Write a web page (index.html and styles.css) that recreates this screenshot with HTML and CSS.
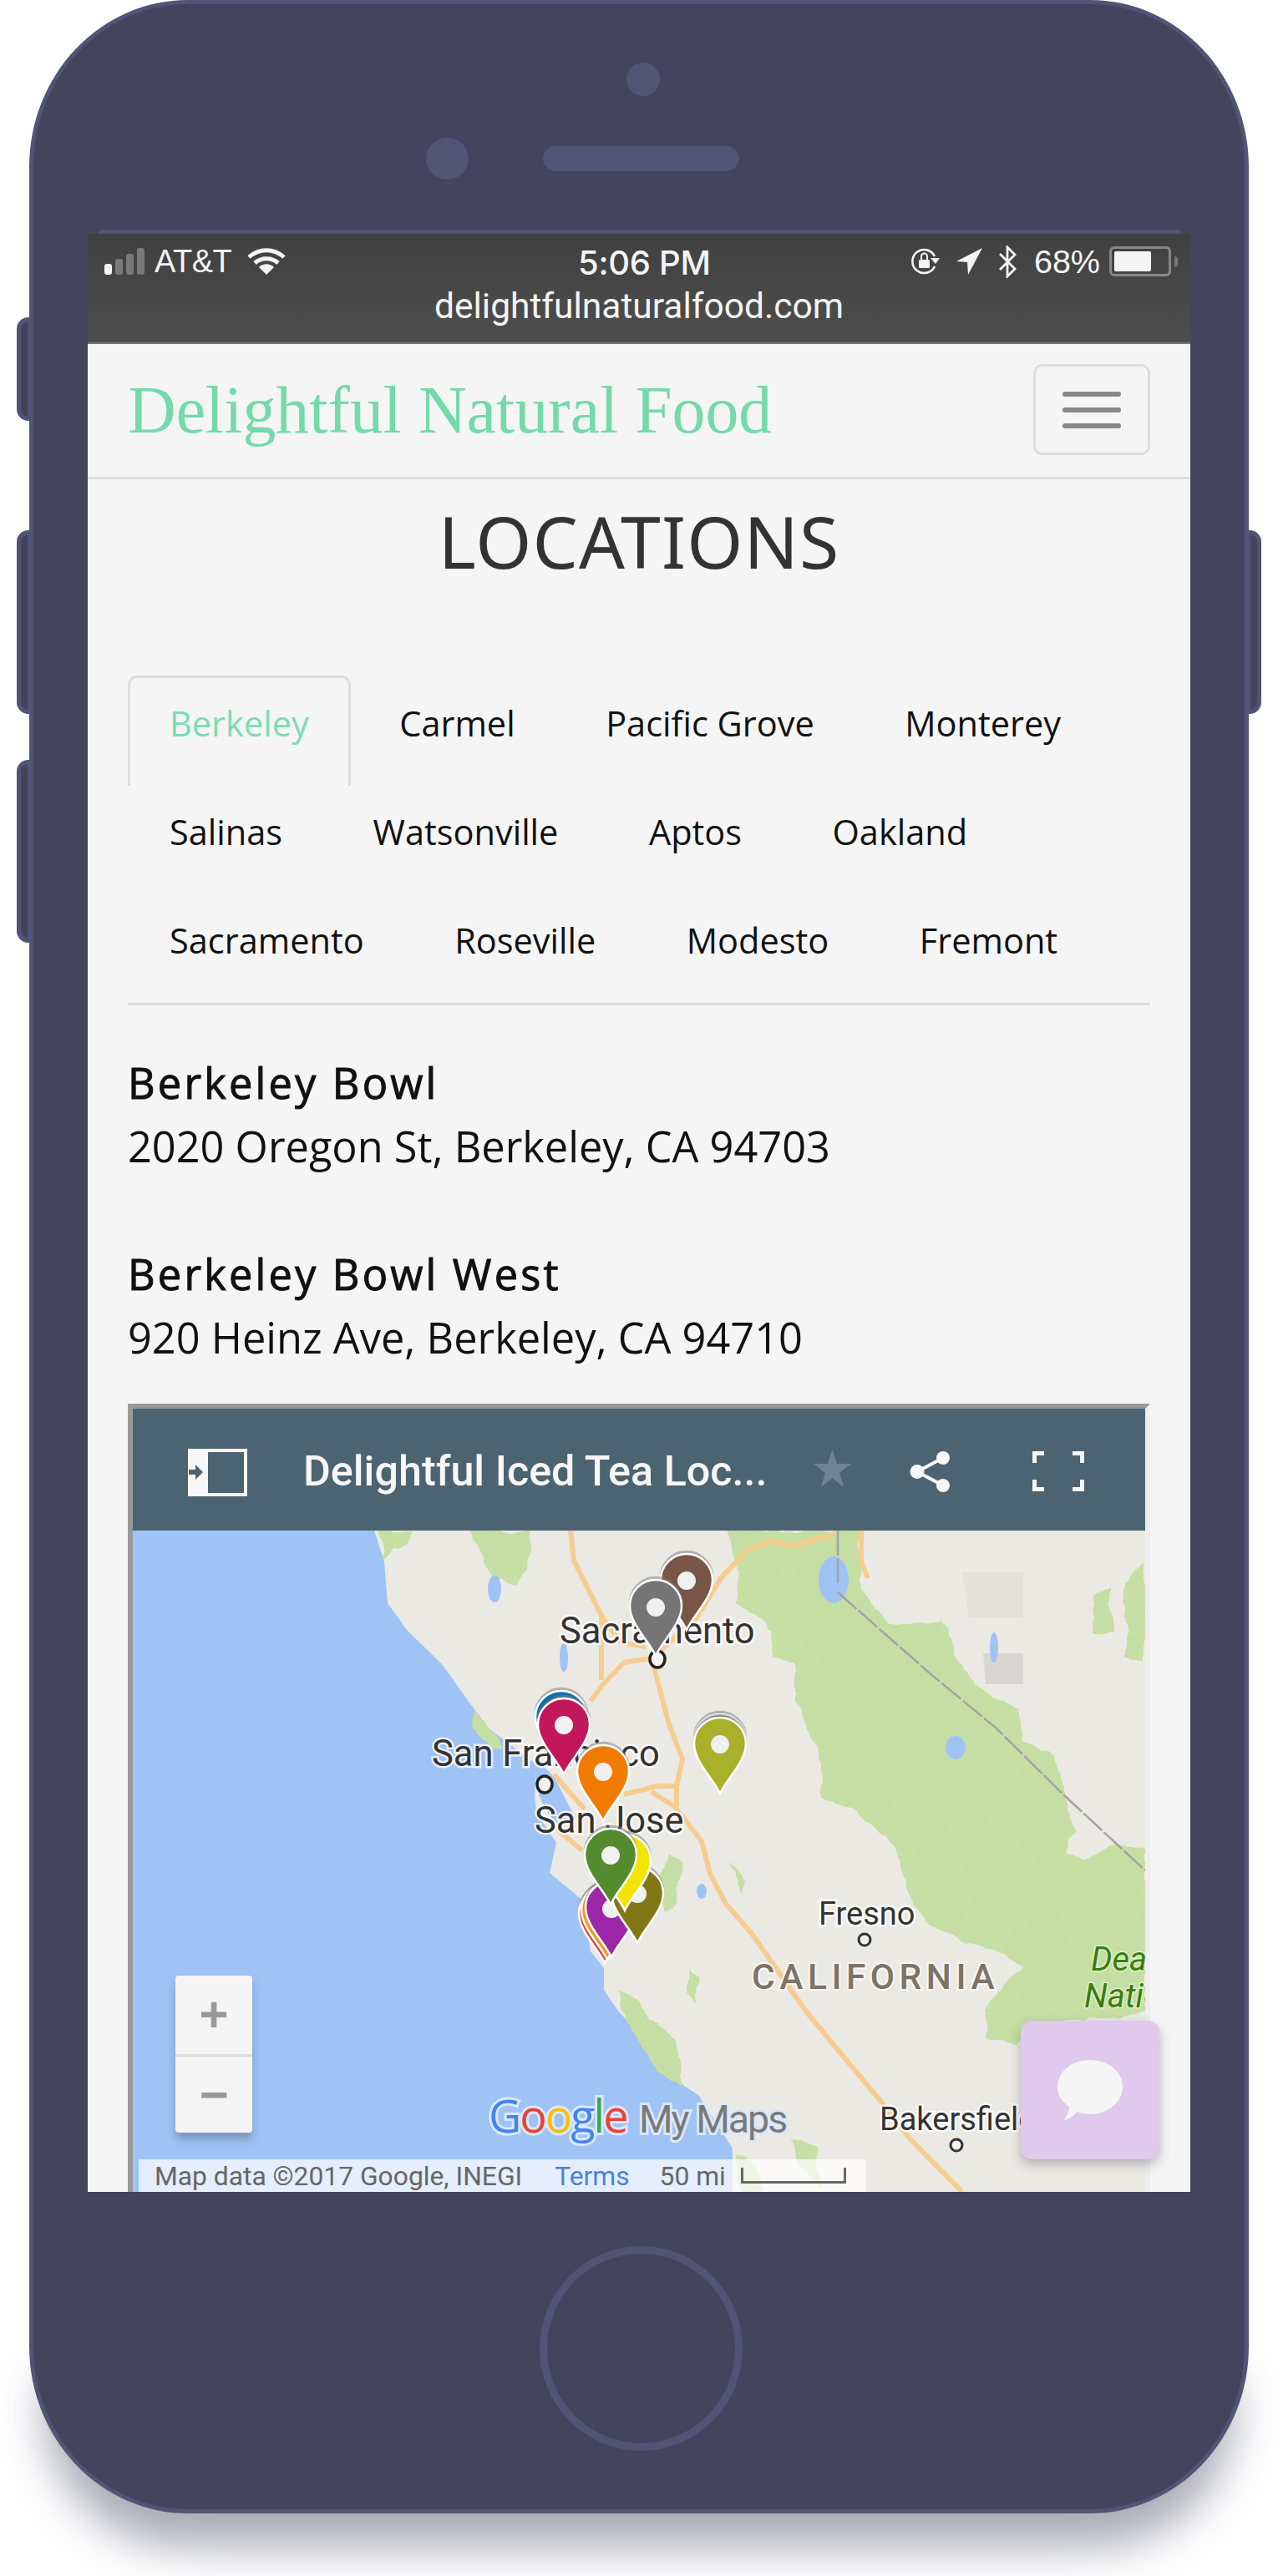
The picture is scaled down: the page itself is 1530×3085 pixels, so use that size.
FILE: index.html
```html
<!DOCTYPE html>
<html lang="en">
<head>
<meta charset="utf-8">
<title>Delightful Natural Food - Locations</title>
<link rel="stylesheet" href="styles.css">
</head>
<body>
<div class="stage">
  <div class="phone-shadow"></div>
  <div class="side-btn side-mute"></div>
  <div class="side-btn side-up"></div>
  <div class="side-btn side-down"></div>
  <div class="side-btn side-power"></div>
  <div class="phone">
    <div class="bezel-top">
      <div class="sensor"></div>
      <div class="earpiece-row">
        <div class="camera"></div>
        <div class="speaker"></div>
      </div>
    </div>
    <div class="screen-lip"></div>
    <div class="screen">
      <div class="status">
        <div class="status-row">
          <div class="status-left">
            <svg class="signal" viewBox="0 0 49 32"><rect y="19" width="9" height="13" rx="3" fill="#f4f4f4"/><rect x="13" y="13" width="9" height="19" rx="3" fill="#7a7a7a"/><rect x="26" y="7" width="9" height="25" rx="3" fill="#7a7a7a"/><rect x="39" width="9" height="32" rx="3" fill="#7a7a7a"/></svg>
            <span class="carrier">AT&amp;T</span>
            <svg class="wifi" viewBox="0 0 46 32"><path d="M2 11C14 0 32 0 44 11" fill="none" stroke="#f4f4f4" stroke-width="5"/><path d="M9 18C17 11 29 11 37 18" fill="none" stroke="#f4f4f4" stroke-width="5"/><path d="M14 23C19 18 27 18 32 23L23 32Z" fill="#f4f4f4"/></svg>
          </div>
          <span class="clock">5:06 PM</span>
          <div class="status-right">
            <svg class="ico-lock" viewBox="0 0 36 32"><path d="M30 22A14 14 0 1 1 30 10" fill="none" stroke="#f4f4f4" stroke-width="2.6"/><path d="M25 12L36 12L31 19Z" fill="#f4f4f4"/><rect x="11" y="14" width="13" height="10" rx="1.5" fill="#f4f4f4"/><path d="M14 14V10a3.5 3.5 0 0 1 7 0V14" fill="none" stroke="#f4f4f4" stroke-width="2"/></svg>
            <svg class="ico-loc" viewBox="0 0 31 32"><path d="M31 0L14 32L13 17L0 16Z" fill="#f4f4f4"/></svg>
            <svg class="ico-bt" viewBox="0 0 23 39"><path d="M2 10L20 28L11 37V2L20 11L2 29" fill="none" stroke="#f4f4f4" stroke-width="2.8"/></svg>
            <span class="pct">68%</span>
            <div class="battery"><div class="battery-fill"></div></div>
            <div class="battery-nub"></div>
          </div>
        </div>
        <div class="url">delightfulnaturalfood.com</div>
      </div>
      <header class="nav">
        <a class="brand">Delightful Natural Food</a>
        <div class="toggle"><span></span><span></span><span></span></div>
      </header>
      <main class="content">
        <h1 class="page-title">LOCATIONS</h1>
        <nav class="tabs">
          <a class="tab active">Berkeley</a><a class="tab">Carmel</a><a class="tab">Pacific Grove</a><a class="tab">Monterey</a>
          <a class="tab">Salinas</a><a class="tab">Watsonville</a><a class="tab">Aptos</a><a class="tab">Oakland</a>
          <a class="tab">Sacramento</a><a class="tab">Roseville</a><a class="tab">Modesto</a><a class="tab">Fremont</a>
        </nav>
        <section class="store">
          <h2>Berkeley Bowl</h2>
          <p>2020 Oregon St, Berkeley, CA 94703</p>
        </section>
        <section class="store">
          <h2>Berkeley Bowl West</h2>
          <p>920 Heinz Ave, Berkeley, CA 94710</p>
        </section>
        <div class="map-frame">
          <div class="map-head">
            <svg class="mh-panel" viewBox="0 0 71 57"><path d="M0 0H24V57H0Z" fill="#f7f7f7"/><path d="M24 2H69V55H24" fill="none" stroke="#f7f7f7" stroke-width="4"/><path d="M1 25H9V19L18 28L9 37V31H1Z" fill="#4c6472"/></svg>
            <span class="mh-title">Delightful Iced Tea Loc...</span>
            <svg class="mh-star" viewBox="0 0 45 47"><path d="M22.500 1L28 18H45L31 29L36 46L22.500 35L9 46L14 29L0 18H17Z" fill="#6f8494"/></svg>
            <svg class="mh-share" viewBox="0 0 49 49"><path d="M40 8L9 24.500L40 41" fill="none" stroke="#f7f7f7" stroke-width="4"/><circle cx="40" cy="8" r="8" fill="#f7f7f7"/><circle cx="9" cy="24.500" r="8.500" fill="#f7f7f7"/><circle cx="40" cy="41" r="8" fill="#f7f7f7"/></svg>
            <svg class="mh-full" viewBox="0 0 62 48"><path d="M2.500 14V2.500H14M48 2.500H59.500V14M2.500 34V45.500H14M48 45.500H59.500V34" fill="none" stroke="#f7f7f7" stroke-width="5"/></svg>
          </div>
          <div class="map-body">
            <svg class="map-art" viewBox="159 1833 1212 792">
              <defs>
                <path id="pin" d="M0 90C-8 72 -31 52 -31 30A31 31 0 0 1 31 30C31 52 8 72 0 90Z"/>
                <filter id="rough" filterUnits="userSpaceOnUse" x="159" y="1833" width="1212" height="792">
                  <feTurbulence type="fractalNoise" baseFrequency=".03" numOctaves="3" seed="4" result="n"/>
                  <feDisplacementMap in="SourceGraphic" in2="n" scale="14" xChannelSelector="R" yChannelSelector="G" result="d"/>
                  <feTurbulence type="fractalNoise" baseFrequency=".05 .08" numOctaves="3" seed="9"/>
                  <feColorMatrix type="matrix" values="0 0 0 0 .55  0 0 0 0 .72  0 0 0 0 .40  0 0 0 1.6 -.7"/>
                  <feComposite in2="d" operator="in" result="tex"/>
                  <feMerge><feMergeNode in="d"/><feMergeNode in="tex"/></feMerge>
                </filter>
              </defs>
              <rect x="159" y="1833" width="1212" height="792" fill="#9fc3f5"/>
              <path d="M448 1833L460 1870L464 1920L488 1953L529 1993L565 2043L585 2070L642 2113L640 2150L642 2170L666 2207L658 2243L699 2277L707 2337L723 2357L723 2383L739 2407L772 2443L812 2493L837 2510L877 2573L877 2625H1371V1833Z" fill="#ebe9e4"/>
              <path d="M642 2112C665 2118 672 2150 690 2178L668 2184C650 2170 638 2140 642 2112Z" fill="#9fc3f5"/>
              <g fill="#c6dfa3" filter="url(#rough)">
                <path d="M452 1833H496L490 1847L470 1852L460 1870Z"/>
                <path d="M561 1833H634L632 1880L618 1897L590 1890L575 1860Z"/>
                <path d="M869 1833L885 1883L881 1917L926 1953L922 1987L950 1995L950 2037L982 2103L985 2150L1023 2170L1071 2210L1088 2267L1112 2307L1193 2337L1225 2357L1193 2383L1185 2403L1181 2440L1217 2450L1240 2420H1330L1371 2410V2213L1330 2208L1300 2230L1274 2217L1290 2190L1274 2143L1262 2103L1225 2083L1221 2047L1165 2020L1128 1940L1063 1947L1031 1903V1833Z"/>
                <path d="M1347 1895L1371 1870V1990L1347 1985Z"/>
                <path d="M1310 1915L1331 1903V1953H1306Z"/>
                <path d="M570 2045L585 2070L605 2095L585 2092L565 2070Z"/>
                <path d="M740 2385L765 2395L775 2420L808 2440L815 2500L790 2480L750 2420Z"/>
                <path d="M800 2220L815 2228L810 2280L798 2290L790 2260Z"/>
                <path d="M825 2358L838 2370L832 2400L822 2380Z"/>
                <path d="M880 2580L905 2590L915 2625H885Z"/>
                <path d="M950 2560L975 2570L985 2620L955 2590Z"/>
                <path d="M872 2230L890 2250L885 2268Z"/>
              </g>
              <path d="M1152 1883H1225V1937H1160Z" fill="#e3e1d8"/>
              <path d="M1177 1980H1225V2017H1180Z" fill="#d7d6d2"/>
              <g fill="#9fc3f5">
                <ellipse cx="998" cy="1892" rx="18" ry="28"/>
                <ellipse cx="1190" cy="1973" rx="5" ry="18"/>
                <ellipse cx="1144" cy="2093" rx="12" ry="14"/>
                <ellipse cx="592" cy="1903" rx="8" ry="16"/>
                <ellipse cx="675" cy="1985" rx="5" ry="17"/>
                <ellipse cx="840" cy="2265" rx="6" ry="9"/>
              </g>
              <path d="M1003 1833V1897M1003 1907L1112 2003L1193 2070L1274 2150L1371 2240" fill="none" stroke="#a3a3a6" stroke-width="2.500" stroke-dasharray="30 3"/>
              <g fill="none" stroke="#f6cc8f" stroke-width="6" stroke-linejoin="round">
                <path d="M683 1833L687 1869L720 1935V2012"/>
                <path d="M707 2037L723 2016L747 1991L780 1986L787 2012L800 2062L817 2107L810 2139V2163"/>
                <path d="M810 2139H787L747 2149"/>
                <path d="M780 2146L807 2163L840 2205L850 2244L869 2280L901 2317L966 2410L999 2450L1055 2517L1088 2560L1152 2625"/>
                <path d="M663 2125L700 2167M667 2191L697 2216"/>
                <path d="M780 1986L833 1939L863 1890L893 1858L920 1846L950 1851L999 1837"/>
                <path d="M1031 1833V1870L1039 1890"/>
                <path d="M720 1935L743 1967L773 1972"/>
              </g>
              <g class="map-label">
                <text x="670" y="1968">Sacramento</text>
                <text x="517" y="2115">San Francisco</text>
                <text x="640" y="2195">San Jose</text>
              </g>
              <g class="map-label-sm">
                <text x="980" y="2305">Fresno</text>
                <text x="1053" y="2551">Bakersfield</text>
              </g>
              <text class="map-region" x="900" y="2382">CALIFORNIA</text>
              <g class="map-park">
                <text x="1306" y="2360">Death Valley</text>
                <text x="1298" y="2404">National Park</text>
              </g>
              <g fill="#f4f4f4" stroke="#222" stroke-width="3.500">
                <ellipse cx="787" cy="1987" rx="9" ry="10"/>
                <ellipse cx="652" cy="2137" rx="9" ry="10"/>
              </g>
              <g fill="#f0f0f0" stroke="#333" stroke-width="3">
                <circle cx="1035" cy="2323" r="7"/>
                <circle cx="1145" cy="2569" r="7"/>
              </g>
              <g class="pins">
                <use href="#pin" x="822" y="1862" fill="#795548"/>
                <circle cx="822" cy="1893" r="11" fill="#f0f0f0"/>
                <use href="#pin" x="785" y="1893" fill="#757575"/>
                <circle cx="785" cy="1925" r="11" fill="#f0f0f0"/>
                <use href="#pin" x="672" y="2026" fill="#0f6fa9"/>
                <use href="#pin" x="675" y="2035" fill="#c2185b"/>
                <circle cx="675" cy="2066" r="11" fill="#f0f0f0"/>
                <use href="#pin" x="862" y="2054" fill="#5f85a8"/>
                <use href="#pin" x="862" y="2058" fill="#a9b029"/>
                <circle cx="862" cy="2089" r="11" fill="#f0f0f0"/>
                <use href="#pin" x="722" y="2091" fill="#ef7c00"/>
                <circle cx="722" cy="2122" r="11" fill="#f0f0f0"/>
                <use href="#pin" x="724" y="2261" fill="#e53935"/>
                <use href="#pin" x="727" y="2257" fill="#ef9a1a"/>
                <use href="#pin" x="732" y="2254" fill="#9c27a8"/>
                <circle cx="732" cy="2286" r="11" fill="#f0f0f0"/>
                <use href="#pin" x="763" y="2237" fill="#827717"/>
                <circle cx="763" cy="2268" r="11" fill="#f0f0f0"/>
                <use href="#pin" x="748" y="2198" fill="#f4e400"/>
                <use href="#pin" x="731" y="2191" fill="#558b2f"/>
                <circle cx="731" cy="2222" r="11" fill="#f0f0f0"/>
              </g>
              <g class="map-logo">
                <text x="585" y="2554"><tspan fill="#4285f4">G</tspan><tspan fill="#ea4335">o</tspan><tspan fill="#fbbc05">o</tspan><tspan fill="#4285f4">g</tspan><tspan fill="#34a853">l</tspan><tspan fill="#ea4335">e</tspan></text>
                <text class="my-maps" x="765" y="2554">My Maps</text>
              </g>
            </svg>
            <div class="zoom-ctl">
              <div class="zoom-btn">+</div>
              <div class="zoom-btn">&#8722;</div>
            </div>
            <div class="attrib">
              <span>Map data &#169;2017 Google, INEGI</span>
              <span class="terms">Terms</span>
              <span>50 mi</span>
              <span class="scale-bar"></span>
            </div>
          </div>
        </div>
      </main>
      <div class="chat">
        <svg class="chat-ico" viewBox="0 0 78 72"><path d="M39 0C61 0 78 14 78 32C78 50 61 65 39 65C33 65 28 64 24 62C20 66 14 71 8 72C12 66 14 60 14 56C5 50 0 42 0 32C0 14 17 0 39 0Z" fill="#f5f5f5"/></svg>
      </div>
    </div>
    <div class="bezel-bottom"><div class="home"></div></div>
  </div>
</div>
</body>
</html>
```
FILE: styles.css
```css
* { box-sizing: border-box; }
html, body { margin: 0; padding: 0; background: #fff; }
.stage { position: relative; width: 1530px; height: 3085px; overflow: hidden; padding-left: 35px; }

.phone-shadow { position: absolute; left: 52px; top: 2850px; width: 1426px; height: 200px; background: #a0a1ad; border-radius: 0 0 170px 170px; filter: blur(26px); opacity: .9; }
.side-btn { position: absolute; width: 18px; background: #44445c; border: 5px solid #515474; }
.side-mute { left: 20px; top: 380px; height: 124px; border-radius: 14px 0 0 14px; }
.side-up { left: 20px; top: 635px; height: 220px; border-radius: 14px 0 0 14px; }
.side-down { left: 20px; top: 910px; height: 219px; border-radius: 14px 0 0 14px; }
.side-power { left: 1492px; top: 635px; height: 220px; border-radius: 0 14px 14px 0; }

.phone { position: relative; width: 1460px; height: 3010px; background: #44445c; border: 5px solid #515474; border-radius: 190px / 200px; display: flex; flex-direction: column; align-items: center; }
.bezel-top { height: 270px; width: 100%; display: flex; flex-direction: column; align-items: center; padding-top: 70px; flex: none; }
.sensor { width: 40px; height: 40px; border-radius: 50%; background: #515474; margin-left: 10px; }
.earpiece-row { display: flex; align-items: center; gap: 89px; margin-top: 50px; margin-left: -135px; }
.camera { width: 51px; height: 50px; border-radius: 50%; background: #515474; }
.speaker { width: 235px; height: 30px; border-radius: 15px; background: #515474; }
.screen-lip { width: 1297px; height: 5px; background: #515474; border-radius: 8px 8px 0 0; flex: none; }

.screen { position: relative; width: 1320px; height: 2345px; background: #f5f5f5; overflow: hidden; flex: none; }
.status { height: 132px; background: linear-gradient(#404040, #4e4e4e); border-bottom: 2px solid #777; color: #f4f4f4; font-family: "Liberation Sans", sans-serif; padding: 13px 15px 0 20px; }
.status-row { position: relative; display: flex; justify-content: space-between; align-items: center; height: 40px; }
.status-left, .status-right { display: flex; align-items: center; }
.signal { width: 49px; height: 32px; }
.carrier { font-size: 38px; margin-left: 11px; letter-spacing: -.5px; }
.wifi { width: 46px; height: 32px; margin-left: 19px; }
.clock { position: absolute; left: 567px; top: -3px; font-size: 40px; font-family: Inter, sans-serif; font-weight: 500; letter-spacing: -.3px; }
.ico-lock { width: 36px; height: 32px; }
.ico-loc { width: 31px; height: 32px; margin-left: 20px; }
.ico-bt { width: 23px; height: 39px; margin-left: 19px; }
.pct { font-size: 39.500px; margin-left: 20px; }
.battery { width: 74px; height: 36px; border: 3px solid #888; border-radius: 6px; padding: 3px; margin-left: 11px; }
.battery-fill { width: 44px; height: 24px; background: #f5f5f5; border-radius: 2px; }
.battery-nub { width: 4px; height: 13px; background: #777; border-radius: 0 4px 4px 0; margin-left: 4px; }
.url { text-align: center; font-size: 42.500px; margin: 11px -15px 0 -20px; line-height: 46px; font-family: Roboto, sans-serif; }

.nav { height: 162px; display: flex; align-items: center; justify-content: space-between; padding: 0 48px 0 48px; border-bottom: 3px solid #ddd; }
.brand { font-family: "Liberation Serif", serif; font-size: 79.800px; color: #74d9ad; }
.toggle { width: 140px; height: 109px; border: 3px solid #ddd; border-radius: 11px; display: flex; flex-direction: column; align-items: center; justify-content: center; gap: 13px; margin-top: -2px; }
.toggle span { display: block; width: 70px; height: 6px; border-radius: 3px; background: #888; }

.content { padding: 0 48px; }
.page-title { margin: 28px 0 0; text-align: center; font-family: "Noto Sans", sans-serif; font-weight: 400; font-size: 86px; line-height: 92px; letter-spacing: 1.100px; color: #333; }
.tabs { display: flex; flex-wrap: wrap; margin-top: 115px; border-bottom: 3px solid #ddd; padding-bottom: 2px; }
.tab { display: block; height: 132px; margin-bottom: -2px; padding: 0 47px; margin-right: 8.500px; line-height: 108px; font-family: "Open Sans", sans-serif; font-size: 41.500px; color: #111; border: 3px solid transparent; border-bottom: 0; white-space: nowrap; }
.tab.active { color: #7bdcb5; border-color: #ddd; border-radius: 11px 11px 0 0; }
.store { font-family: "Open Sans", sans-serif; color: #111; padding-top: 55px; }
.store + .store { padding-top: 77px; }
.store h2 { margin: 0; font-weight: 400; -webkit-text-stroke: 1px #111; font-size: 50.500px; line-height: 75px; letter-spacing: 3.200px; }
.store p { margin: 0; font-size: 50.500px; line-height: 77px; }

.map-frame { margin-top: 41px; width: 1224px; height: 960px; border-top: 6px solid #999; border-left: 6px solid #999; border-right: 6px solid #eee; }
.map-head { height: 146px; background: #4c6472; color: #f7f7f7; position: relative; display: flex; align-items: center; }
.mh-panel { position: absolute; left: 66px; top: 48px; width: 71px; height: 57px; }
.mh-title { position: absolute; left: 204px; top: 44px; font-family: Roboto, sans-serif; font-weight: 500; font-size: 50.300px; line-height: 62px; white-space: nowrap; }
.mh-star { position: absolute; left: 815px; top: 48px; width: 45px; height: 47px; }
.mh-share { position: absolute; left: 930px; top: 51px; width: 49px; height: 49px; }
.mh-full { position: absolute; left: 1077px; top: 51px; width: 62px; height: 48px; }
.map-body { position: relative; height: 792px; }
.map-art { display: block; width: 1212px; height: 792px; }
.map-label text { font: 400 43.500px Roboto, sans-serif; fill: #333; stroke: #fff; stroke-width: 5px; paint-order: stroke; stroke-opacity: .8; }
.map-label-sm text { font: 400 38px Roboto, sans-serif; fill: #333; stroke: #fff; stroke-width: 5px; paint-order: stroke; stroke-opacity: .8; }
.map-region { font: 500 42.500px Roboto, sans-serif; letter-spacing: 5.500px; fill: #7c7467; stroke: #fff; stroke-width: 4px; paint-order: stroke; stroke-opacity: .7; }
.map-park text { font: italic 400 40px Roboto, sans-serif; fill: #3a7d0a; stroke: #fff; stroke-width: 3px; paint-order: stroke; stroke-opacity: .5; }
.pins use { stroke: #fff; stroke-width: 2.5px; filter: drop-shadow(0 -3px 0 rgba(120,120,120,.5)); }
.map-logo text { font: 500 54px "Open Sans", sans-serif; stroke: #dbe8fa; stroke-width: 6px; paint-order: stroke; letter-spacing: -2px; }
.map-logo .my-maps { fill: #7a7a7a; font-family: Roboto, sans-serif; font-weight: 400; font-size: 46.500px; }

.zoom-ctl { position: absolute; left: 51px; top: 533px; width: 92px; height: 188px; background: #f5f5f5; border-radius: 4px; box-shadow: 0 8px 10px rgba(60,70,90,.35); }
.zoom-btn { height: 94px; display: flex; align-items: center; justify-content: center; font: 700 60px/1 "Liberation Sans", sans-serif; color: #999; }
.zoom-btn + .zoom-btn { border-top: 3px solid #ddd; }
.attrib { position: absolute; left: 7px; top: 753px; width: 871px; height: 39px; background: rgba(255,255,255,.72); padding-left: 19px; display: flex; align-items: center; font: 400 31.800px Roboto, sans-serif; color: #666; white-space: nowrap; }
.terms { color: #4a80dd; margin: 0 36px 0 39px; }
.scale-bar { width: 126px; height: 19px; margin-left: 18px; border: 3px solid #666; border-top: 0; }

.chat { position: absolute; left: 1117px; top: 2140px; width: 166px; height: 166px; background: #e0c9ec; border-radius: 14px; box-shadow: 0 6px 14px rgba(40,40,60,.3); display: flex; align-items: center; justify-content: center; }
.chat-ico { width: 78px; height: 72px; }

.bezel-bottom { flex: 1; width: 100%; display: flex; align-items: flex-start; justify-content: center; padding-top: 65px; }
.home { width: 243px; height: 245px; border-radius: 50%; border: 9px solid #515474; margin-left: 4px; }
```
